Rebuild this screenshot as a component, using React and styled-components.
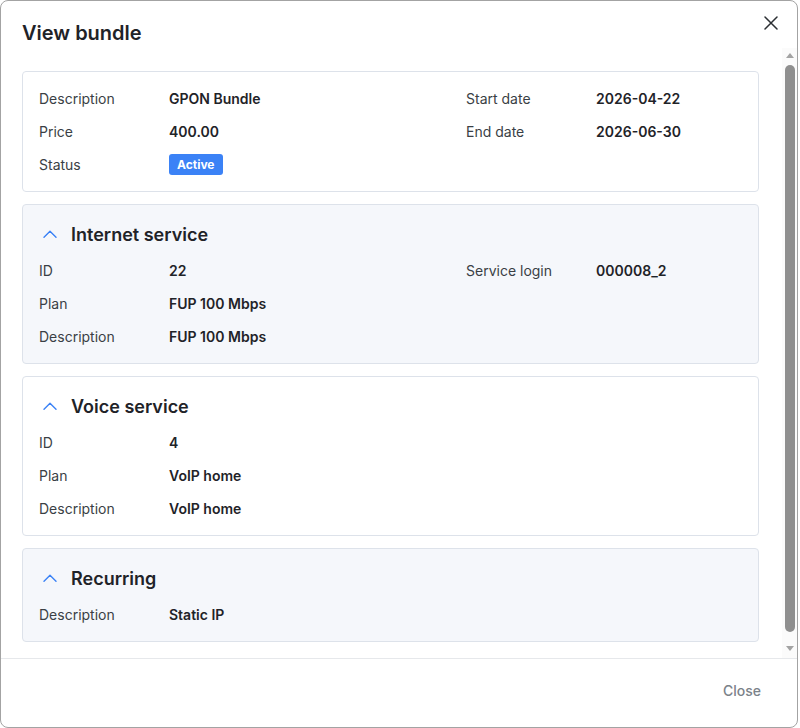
import { useEffect, useRef } from "react";
import styled, { createGlobalStyle } from "styled-components";

const GlobalStyle = createGlobalStyle`
  html, body {
    margin: 0;
    padding: 0;
    background: #ffffff;
  }
  body {
    font-family: Inter, "Noto Sans", sans-serif;
    color: #1f2328;
  }
  * {
    box-sizing: border-box;
  }
`;

const summary = {
  left: [
    ["Description", "GPON Bundle"],
    ["Price", "400.00"],
    ["Status", "__badge__"],
  ],
  right: [
    ["Start date", "2026-04-22"],
    ["End date", "2026-06-30"],
  ],
};

const sections = [
  {
    title: "Internet service",
    tinted: true,
    left: [
      ["ID", "22"],
      ["Plan", "FUP 100 Mbps"],
      ["Description", "FUP 100 Mbps"],
    ],
    right: [["Service login", "000008_2"]],
  },
  {
    title: "Voice service",
    tinted: false,
    left: [
      ["ID", "4"],
      ["Plan", "VoIP home"],
      ["Description", "VoIP home"],
    ],
    right: [],
  },
  {
    title: "Recurring",
    tinted: true,
    left: [["Description", "Static IP"]],
    right: [],
  },
];

function ChevronUp() {
  return (
    <svg width="14" height="8" viewBox="0 0 14 8" fill="none">
      <polyline points="1,7.2 7,1.2 13,7.2" stroke="#3b82f6" strokeWidth="1.4" strokeLinecap="round" strokeLinejoin="round" />
    </svg>
  );
}

function CloseIcon() {
  return (
    <svg width="14" height="14" viewBox="0 0 14 14" fill="none">
      <path d="M1 1L13 13M13 1L1 13" stroke="#2b2f33" strokeWidth="1.5" strokeLinecap="round" />
    </svg>
  );
}

function Fields({ rows }) {
  return (
    <Column>
      {rows.map(([label, value]) => (
        <Field key={label}>
          <Label>{label}</Label>
          {value === "__badge__" ? <Badge>Active</Badge> : <Value>{value}</Value>}
        </Field>
      ))}
    </Column>
  );
}

function App() {
  const scrollRef = useRef(null);

  useEffect(() => {
    if (scrollRef.current) scrollRef.current.scrollTop = 7;
  }, []);

  return (
    <>
      <GlobalStyle />
      <Modal>
        <Header>
          <Title>View bundle</Title>
          <CloseButton aria-label="close">
            <CloseIcon />
          </CloseButton>
        </Header>
        <Body>
          <ScrollArea ref={scrollRef}>
            <Card>
              <FieldGrid>
                <Fields rows={summary.left} />
                <Fields rows={summary.right} />
              </FieldGrid>
            </Card>
            {sections.map((s) => (
              <Card key={s.title} $tinted={s.tinted}>
                <SectionTitle>
                  <ChevronUp />
                  <span>{s.title}</span>
                </SectionTitle>
                <FieldGrid>
                  <Fields rows={s.left} />
                  <Fields rows={s.right} />
                </FieldGrid>
              </Card>
            ))}
          </ScrollArea>
          <Scrollbar>
            <ScrollArrow $dir="up" />
            <ThumbTrack>
              <Thumb />
            </ThumbTrack>
            <ScrollArrow $dir="down" />
          </Scrollbar>
        </Body>
        <Footer>
          <FooterButton>Close</FooterButton>
        </Footer>
      </Modal>
    </>
  );
}

export default App;

const Modal = styled.div`
  width: 798px;
  height: 728px;
  border: 1px solid #a3a3a3;
  border-radius: 8px;
  background: #ffffff;
  display: flex;
  flex-direction: column;
  overflow: hidden;
`;

const Header = styled.header`
  height: 47px;
  flex: none;
  display: flex;
  justify-content: space-between;
  align-items: flex-start;
  padding: 19px 19px 0 21px;
`;

const Title = styled.h2`
  margin: 0;
  font-size: 20px;
  line-height: 26px;
  font-weight: 600;
  color: #1f2328;
`;

const CloseButton = styled.button`
  border: none;
  background: none;
  padding: 0;
  margin-top: -4px;
  width: 14px;
  height: 14px;
  display: flex;
  cursor: pointer;
`;

const Body = styled.div`
  flex: 1;
  min-height: 0;
  display: flex;
`;

const ScrollArea = styled.div`
  flex: 1;
  overflow: hidden;
  padding: 30px 23px 30px 21px;
  display: flex;
  flex-direction: column;
  gap: 12px;
`;

const Scrollbar = styled.div`
  width: 15px;
  flex: none;
  display: flex;
  flex-direction: column;
  align-items: center;
  background: #fbfbfb;
  padding-bottom: 3px;
`;

const ScrollArrow = styled.div`
  height: 15px;
  width: 15px;
  flex: none;
  display: flex;
  align-items: center;
  justify-content: center;
  &::before {
    content: "";
    width: 0;
    height: 0;
    border-left: 4.5px solid transparent;
    border-right: 4.5px solid transparent;
    ${(p) =>
      p.$dir === "up"
        ? "border-bottom: 5px solid #a3a3a3; margin-bottom: 1px;"
        : "border-top: 5px solid #a3a3a3; margin-top: 1px;"}
  }
`;

const ThumbTrack = styled.div`
  flex: 1;
  width: 100%;
  display: flex;
  justify-content: center;
  padding-top: 2px;
`;

const Thumb = styled.div`
  width: 10px;
  height: 567px;
  border-radius: 5px;
  background: #8f8f8f;
`;

const Card = styled.section`
  flex: none;
  border: 1px solid #dde2ea;
  border-radius: 4px;
  background: ${(p) => (p.$tinted ? "#f5f7fb" : "#ffffff")};
  padding: 10px 16px;
`;

const SectionTitle = styled.div`
  height: 39px;
  display: flex;
  align-items: center;
  gap: 14px;
  padding-left: 4px;
  font-size: 18px;
  font-weight: 600;
  color: #1f2328;
  svg {
    margin-top: -1px;
  }
`;

const FieldGrid = styled.div`
  display: grid;
  grid-template-columns: 427px 1fr;
`;

const Column = styled.div`
  display: flex;
  flex-direction: column;
`;

const Field = styled.div`
  height: 33px;
  display: flex;
  align-items: center;
  font-size: 14px;
`;

const Label = styled.span`
  width: 130px;
  flex: none;
  color: #3a3f45;
`;

const Value = styled.span`
  font-weight: 600;
  color: #1f2328;
`;

const Badge = styled.span`
  display: inline-flex;
  align-items: center;
  height: 21px;
  padding: 0 8px;
  border-radius: 3px;
  background: #3b82f6;
  color: #ffffff;
  font-size: 12px;
  font-weight: 700;
`;

const Footer = styled.footer`
  height: 69px;
  flex: none;
  border-top: 1px solid #e6e8eb;
  display: flex;
  align-items: center;
  justify-content: flex-end;
  padding: 0 36px 6px 0;
`;

const FooterButton = styled.button`
  border: none;
  background: none;
  padding: 0;
  font-family: Inter, "Noto Sans", sans-serif;
  font-size: 14px;
  font-weight: 500;
  color: #7b8289;
  cursor: pointer;
`;
